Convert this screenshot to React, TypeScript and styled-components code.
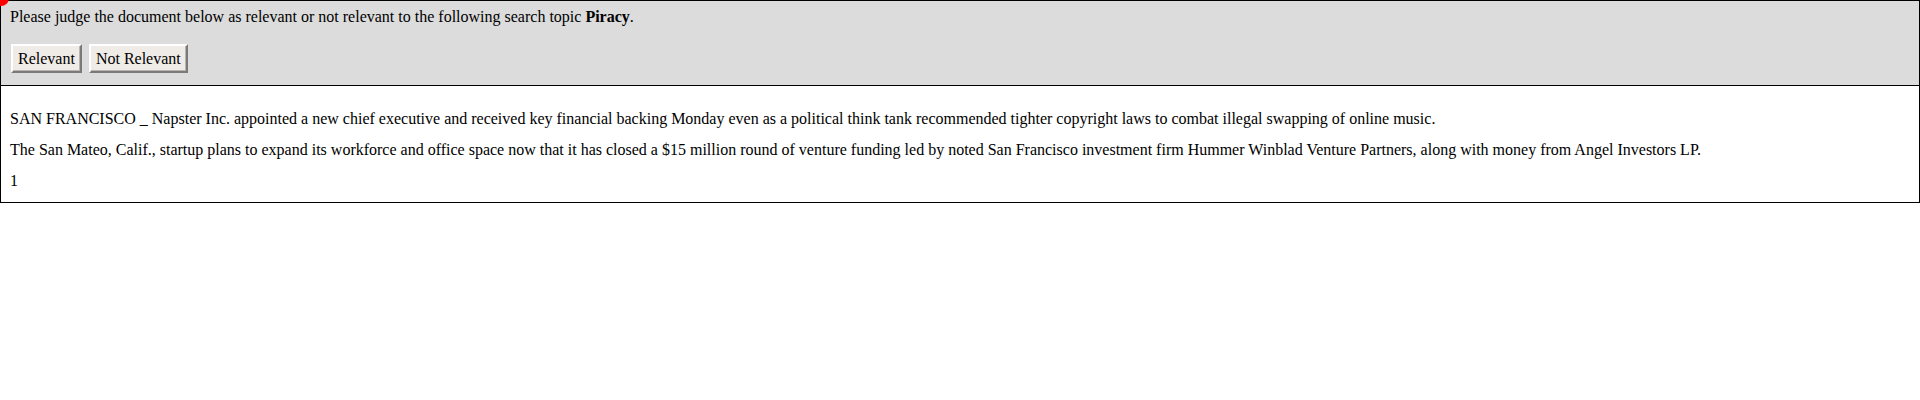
import React from "react";
import styled, { createGlobalStyle } from "styled-components";

const Global = createGlobalStyle`
  html, body { margin: 0; padding: 0; background: #ffffff; }
  body { font-family: "Liberation Serif", "Times New Roman", serif; font-size: 16px; color: #000; }
`;

const Frame = styled.div`
  position: relative;
  border: 1px solid #000;
  box-sizing: border-box;
  width: 100%;
`;

const Dot = styled.span`
  position: absolute;
  left: -8px;
  top: -11px;
  width: 16px;
  height: 16px;
  border-radius: 50%;
  background: #ff0000;
`;

const Header = styled.div`
  background: #dcdcdc;
  border-bottom: 1px solid #000;
  padding: 7px 9px 12px;
`;

const Prompt = styled.div`
  line-height: 18px;
  height: 18px;
`;

const ButtonRow = styled.div`
  display: flex;
  gap: 7px;
  margin-top: 18px;
  padding-left: 1px;
`;

const JudgeButton = styled.button`
  font-family: "Liberation Serif", "Times New Roman", serif;
  font-size: 16px;
  line-height: 18px;
  height: 29px;
  padding: 0 5px;
  background: #efebe7;
  color: #000;
  border: 2px solid;
  border-color: #ffffff #7a7a7a #7a7a7a #ffffff;
  box-shadow: inset -1px -1px 0 #b8b4b0;
  cursor: pointer;
`;

const Body = styled.div`
  padding: 24px 9px 12px;
  display: flex;
  flex-direction: column;
  gap: 13px;
`;

const Para = styled.p`
  margin: 0;
  line-height: 18px;
`;

export default function App() {
  return (
    <>
      <Global />
      <Frame>
        <Dot />
        <Header>
          <Prompt>
            Please judge the document below as relevant or not relevant to the following search topic <b>Piracy</b>.
          </Prompt>
          <ButtonRow>
            <JudgeButton>Relevant</JudgeButton>
            <JudgeButton>Not Relevant</JudgeButton>
          </ButtonRow>
        </Header>
        <Body>
          <Para>
            SAN FRANCISCO _ Napster Inc. appointed a new chief executive and received key financial backing Monday even as a political think tank recommended tighter copyright laws to combat illegal swapping of online music.
          </Para>
          <Para>
            The San Mateo, Calif., startup plans to expand its workforce and office space now that it has closed a $15 million round of venture funding led by noted San Francisco investment firm Hummer Winblad Venture Partners, along with money from Angel Investors LP.
          </Para>
          <Para>1</Para>
        </Body>
      </Frame>
    </>
  );
}
